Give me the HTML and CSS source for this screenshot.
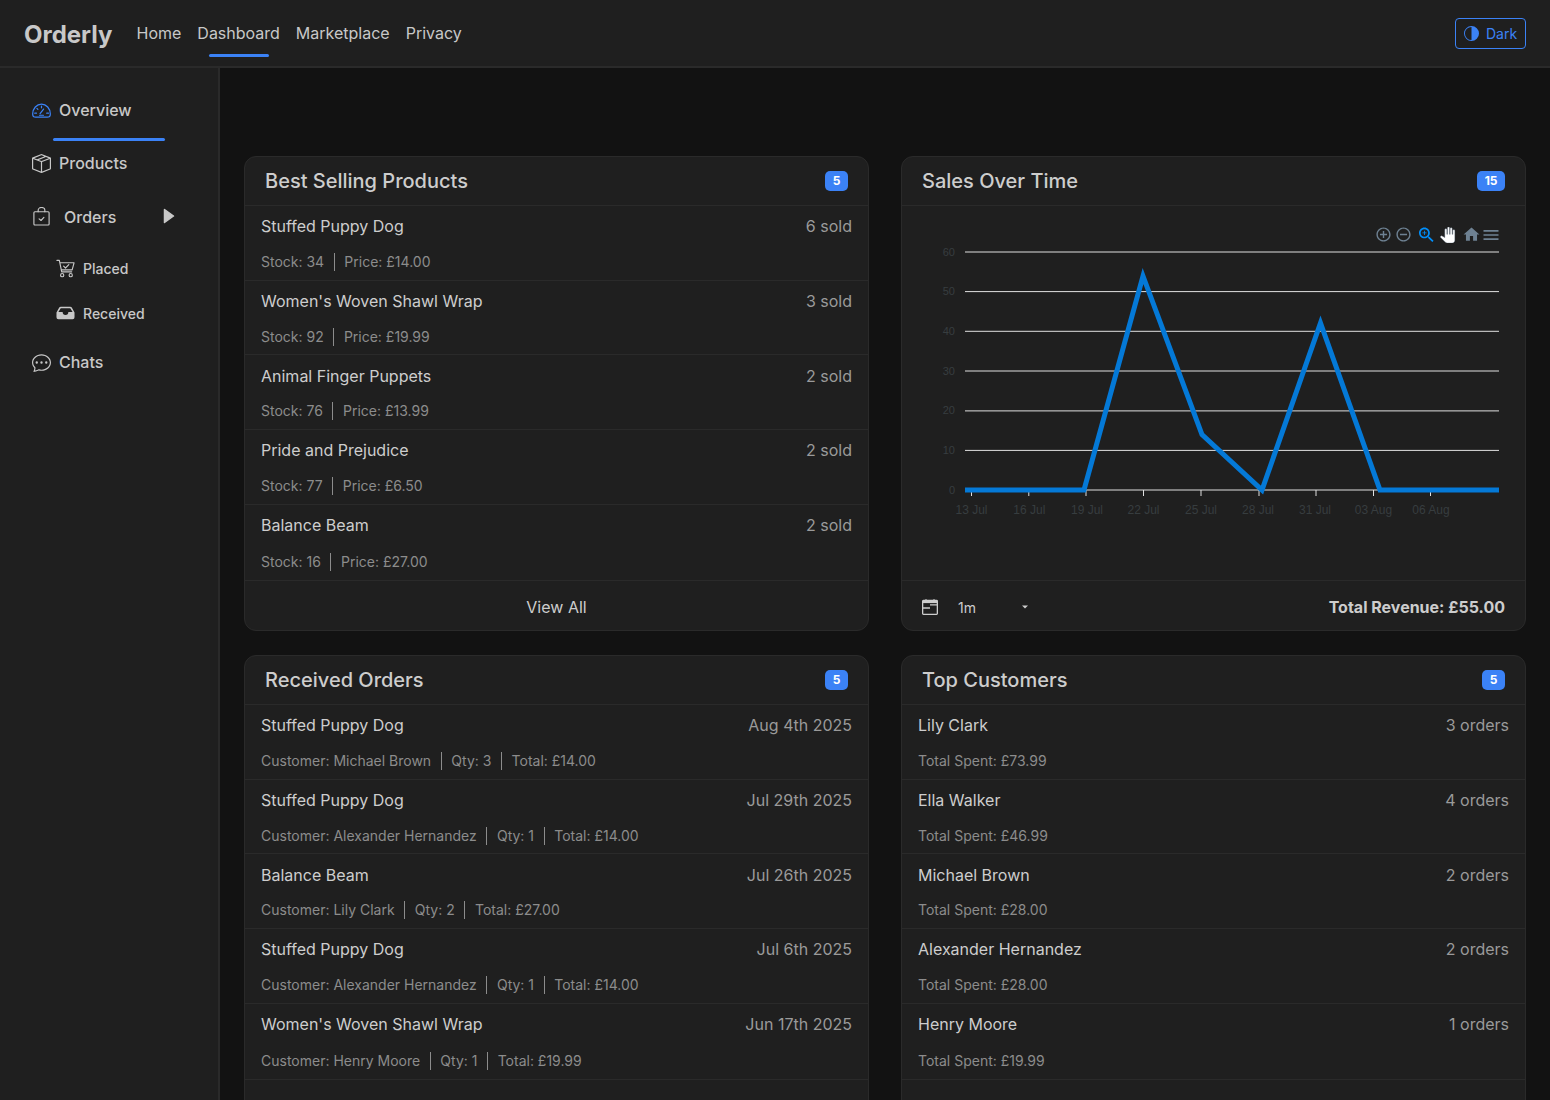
FILE: index.html
```html
<!DOCTYPE html>
<html lang="en">
<head>
<meta charset="utf-8">
<title>Orderly</title>
<link rel="stylesheet" href="styles.css">
</head>
<body>
<header class="topbar">
  <div class="brand">Orderly</div>
  <nav class="topnav">
    <a class="topnav-link">Home</a>
    <a class="topnav-link is-active">Dashboard</a>
    <a class="topnav-link">Marketplace</a>
    <a class="topnav-link">Privacy</a>
  </nav>
  <button class="theme-btn">
    <svg class="theme-icon" viewBox="0 0 16 16"><path fill="currentColor" d="M8 1a7 7 0 0 0 0 14V1zm0-1a8 8 0 1 1 0 16A8 8 0 0 1 8 0z"/></svg>
    <span>Dark</span>
  </button>
</header>
<div class="shell">
  <aside class="sidebar">
    <a class="side-item side-overview is-active">
      <svg class="side-icon gauge" viewBox="0 0 20 20" fill="none" stroke="currentColor" stroke-width="1.3" stroke-linecap="round" stroke-linejoin="round"><path d="M4 17h12c2 0 3.3-1.4 3.3-3.4C19.300 8 15 3.200 10 3.200S.7 8 .7 13.600C.7 15.600 2 17 4 17z"/><path d="M10 5.500v1.700M5.200 7.800l1 1M2.900 12.800h1.800M15.500 12.800h1.800M8.500 13.300l3.700-4.800M8 15h4"/></svg>
      <span>Overview</span>
    </a>
    <a class="side-item side-products">
      <svg class="side-icon" viewBox="0 0 16 16"><path fill="currentColor" d="M8.186 1.113a.5.5 0 0 0-.372 0L1.846 3.5l2.404.961L10.404 2l-2.218-.887zm3.564 1.426L5.596 5 8 5.961 14.154 3.500l-2.404-.961zm3.250 1.700-6.500 2.600v7.922l6.500-2.600V4.240zM7.500 14.762V6.838L1 4.239v7.925l6.500 2.600zM7.443.184a1.500 1.500 0 0 1 1.114 0l7.129 2.852A.5.500 0 0 1 16 3.500v8.662a1 1 0 0 1-.629.928l-7.185 2.874a.5.500 0 0 1-.372 0L.63 13.090a1 1 0 0 1-.63-.928V3.500a.5.500 0 0 1 .314-.464L7.443.184z"/></svg>
      <span>Products</span>
    </a>
    <a class="side-item side-orders">
      <svg class="side-icon bag" viewBox="0 0 20 20" fill="none" stroke="currentColor" stroke-width="1.200" stroke-linecap="round" stroke-linejoin="round"><rect x="2" y="5" width="16" height="14" rx="1"/><path d="M6.500 5V3.500a3.500 3 0 0 1 7 0V5M7.500 12.500l2 1.700 3-3.200"/></svg>
      <span>Orders</span>
      <svg class="side-caret" viewBox="0 0 12 16"><path fill="currentColor" stroke="currentColor" stroke-width="1.500" stroke-linejoin="round" d="M1.500 1.500l9 6.500-9 6.500z"/></svg>
    </a>
    <div class="side-sub">
      <a class="side-subitem">
        <svg class="sub-icon" viewBox="0 0 20 20" fill="none" stroke="currentColor" stroke-width="1.200" stroke-linecap="round" stroke-linejoin="round"><path d="M1 1.500h2.500L6 13.500h10.500M4 4h15l-2 7.500H5.500"/><circle cx="6.500" cy="17" r="1.700"/><circle cx="15.500" cy="17" r="1.700"/><path d="M8 7.500l2 2 3.500-3.500"/></svg>
        <span>Placed</span>
      </a>
      <a class="side-subitem">
        <svg class="sub-icon inbox" viewBox="0 0 20 20"><path fill="currentColor" fill-rule="evenodd" d="M5 3h10a2 2 0 0 1 1.600.8L19.500 9v5a2 2 0 0 1-2 2h-15a2 2 0 0 1-2-2V9l2.900-5.200A2 2 0 0 1 5 3zM5 4.500L2.500 8.500H7a3 3 0 0 0 6 0h4.500L15 4.500z"/></svg>
        <span>Received</span>
      </a>
    </div>
    <a class="side-item side-chats">
      <svg class="side-icon" viewBox="0 0 16 16"><path fill="currentColor" d="M5 8a1 1 0 1 1-2 0 1 1 0 0 1 2 0zm4 0a1 1 0 1 1-2 0 1 1 0 0 1 2 0zm3 1a1 1 0 1 0 0-2 1 1 0 0 0 0 2z"/><path fill="currentColor" d="m2.165 15.803.02-.004c1.830-.363 2.948-.842 3.468-1.105A9.060 9.060 0 0 0 8 15c4.418 0 8-3.134 8-7s-3.582-7-8-7-8 3.134-8 7c0 1.760.743 3.370 1.970 4.600a10.437 10.437 0 0 1-.524 2.318l-.003.011a10.722 10.722 0 0 1-.244.637c-.079.186.074.394.273.362a21.673 21.673 0 0 0 .693-.125zm.8-3.108a1 1 0 0 0-.287-.801C1.618 10.830 1 9.468 1 8c0-3.192 3.004-6 7-6s7 2.808 7 6c0 3.193-3.004 6-7 6a8.060 8.060 0 0 1-2.088-.272 1 1 0 0 0-.711.074c-.387.196-1.240.570-2.634.893a10.970 10.970 0 0 0 .398-2z"/></svg>
      <span>Chats</span>
    </a>
  </aside>
  <main class="content">
    <section class="card">
      <div class="card-head"><h2 class="card-title">Best Selling Products</h2><span class="badge">5</span></div>
      <ul class="rows">
        <li class="row"><div class="row-top"><span class="row-name">Stuffed Puppy Dog</span><span class="row-meta">6 sold</span></div><div class="row-sub"><span>Stock: 34</span><i class="sep"></i><span>Price: £14.00</span></div></li>
        <li class="row"><div class="row-top"><span class="row-name">Women's Woven Shawl Wrap</span><span class="row-meta">3 sold</span></div><div class="row-sub"><span>Stock: 92</span><i class="sep"></i><span>Price: £19.99</span></div></li>
        <li class="row"><div class="row-top"><span class="row-name">Animal Finger Puppets</span><span class="row-meta">2 sold</span></div><div class="row-sub"><span>Stock: 76</span><i class="sep"></i><span>Price: £13.99</span></div></li>
        <li class="row"><div class="row-top"><span class="row-name">Pride and Prejudice</span><span class="row-meta">2 sold</span></div><div class="row-sub"><span>Stock: 77</span><i class="sep"></i><span>Price: £6.50</span></div></li>
        <li class="row"><div class="row-top"><span class="row-name">Balance Beam</span><span class="row-meta">2 sold</span></div><div class="row-sub"><span>Stock: 16</span><i class="sep"></i><span>Price: £27.00</span></div></li>
      </ul>
      <div class="card-foot center">View All</div>
    </section>

    <section class="card">
      <div class="card-head"><h2 class="card-title">Sales Over Time</h2><span class="badge">15</span></div>
      <div class="chart-wrap">
        <svg class="chart" viewBox="1 0 623 374">
          <g class="grid">
            <line x1="64" x2="598" y1="46" y2="46"/><line x1="64" x2="598" y1="85.600" y2="85.600"/><line x1="64" x2="598" y1="125.300" y2="125.300"/><line x1="64" x2="598" y1="165" y2="165"/><line x1="64" x2="598" y1="204.900" y2="204.900"/><line x1="64" x2="598" y1="244.400" y2="244.400"/><line x1="64" x2="598" y1="284" y2="284"/>
            <line x1="70.500" x2="70.500" y1="284" y2="290"/><line x1="127.800" x2="127.800" y1="284" y2="290"/><line x1="185" x2="185" y1="284" y2="290"/><line x1="242.500" x2="242.500" y1="284" y2="290"/><line x1="300" x2="300" y1="284" y2="290"/><line x1="358" x2="358" y1="284" y2="290"/><line x1="415" x2="415" y1="284" y2="290"/><line x1="472.500" x2="472.500" y1="284" y2="290"/><line x1="529.500" x2="529.500" y1="284" y2="290"/>
          </g>
          <g class="y-labels">
            <text x="48" y="50">60</text><text x="48" y="89">50</text><text x="48" y="129">40</text><text x="48" y="169">30</text><text x="48" y="208">20</text><text x="48" y="248">10</text><text x="48" y="288">0</text>
          </g>
          <g class="x-labels">
            <text x="70.500" y="308">13 Jul</text><text x="128.300" y="308">16 Jul</text><text x="186" y="308">19 Jul</text><text x="242.500" y="308">22 Jul</text><text x="300" y="308">25 Jul</text><text x="357" y="308">28 Jul</text><text x="414" y="308">31 Jul</text><text x="472.500" y="308">03 Aug</text><text x="530" y="308">06 Aug</text>
          </g>
          <polyline class="series" points="64,284 183,284 242,70 301,228.500 361,284 419.500,117 479,284 598,284"/>
          <g class="tools">
            <svg x="474" y="20" width="17" height="17" viewBox="0 0 24 24"><path d="M13 7h-2v4H7v2h4v4h2v-4h4v-2h-4V7zm-1-5C6.480 2 2 6.480 2 12s4.480 10 10 10 10-4.480 10-10S17.520 2 12 2zm0 18c-4.410 0-8-3.590-8-8s3.590-8 8-8 8 3.590 8 8-3.590 8-8 8z"/></svg>
            <svg x="494" y="20" width="17" height="17" viewBox="0 0 24 24"><path d="M7 11v2h10v-2H7zm5-9C6.480 2 2 6.480 2 12s4.480 10 10 10 10-4.480 10-10S17.520 2 12 2zm0 18c-4.410 0-8-3.590-8-8s3.590-8 8-8 8 3.590 8 8-3.590 8-8 8z"/></svg>
            <svg class="tool-on" x="515.500" y="19" width="20" height="20" viewBox="0 0 24 24"><path d="M15.500 14h-.79l-.28-.27C15.410 12.590 16 11.110 16 9.500 16 5.910 13.090 3 9.500 3S3 5.910 3 9.500 5.910 16 9.500 16c1.610 0 3.090-.59 4.230-1.570l.27.28v.79l5 4.990L20.490 19l-4.990-5zm-6 0C7.010 14 5 11.990 5 9.500S7.010 5 9.500 5 14 7.010 14 9.500 11.990 14 9.500 14z"/><path d="M12 10h-2v2H9v-2H7V9h2V7h1v2h2v1z"/></svg>
            <svg class="tool-hand" x="538.500" y="21" width="16" height="16" viewBox="0 0 24 24"><path d="M23 5.500V20c0 2.200-1.800 4-4 4h-7.300c-1.080 0-2.100-.43-2.850-1.190L1 14.830s1.260-1.230 1.300-1.250c.22-.19.49-.29.79-.29.22 0 .42.060.6.160.04.010 4.310 2.460 4.310 2.460V4c0-.83.67-1.500 1.500-1.500S11 3.170 11 4v7h1V1.500c0-.83.67-1.500 1.500-1.500S15 .67 15 1.500V11h1V2.500c0-.83.67-1.500 1.500-1.500s1.500.67 1.500 1.500V11h1V5.500c0-.83.67-1.500 1.500-1.500s1.500.67 1.500 1.500z"/></svg>
            <svg x="561" y="19" width="19" height="19" viewBox="0 0 24 24"><path d="M10 20v-6h4v6h5v-8h3L12 3 2 12h3v8z"/></svg>
            <svg x="580" y="19" width="20" height="20" viewBox="0 0 24 24"><path d="M3 18h18v-2H3v2zm0-5h18v-2H3v2zm0-7v2h18V6H3z"/></svg>
          </g>
        </svg>
      </div>
      <div class="card-foot spread">
        <div class="range">
          <svg class="cal-icon" viewBox="0 0 16 16" fill="none" stroke="currentColor" stroke-width="1.300"><rect x=".65" y="1.500" width="14.700" height="13.800" rx=".8"/><path d="M.65 2.800h14.700" stroke-width="2.600"/><path d="M4 .2v1.500M12 .2v1.500M.65 9h7.350M8 5.800h7.350"/></svg>
          <span class="range-value">1m</span>
          <svg class="range-caret" viewBox="0 0 6 4"><path fill="currentColor" d="M0 .5h6L3 3.500z"/></svg>
        </div>
        <strong class="total">Total Revenue: £55.00</strong>
      </div>
    </section>

    <section class="card">
      <div class="card-head"><h2 class="card-title">Received Orders</h2><span class="badge">5</span></div>
      <ul class="rows">
        <li class="row"><div class="row-top"><span class="row-name">Stuffed Puppy Dog</span><span class="row-meta">Aug 4th 2025</span></div><div class="row-sub"><span>Customer: Michael Brown</span><i class="sep"></i><span>Qty: 3</span><i class="sep"></i><span>Total: £14.00</span></div></li>
        <li class="row"><div class="row-top"><span class="row-name">Stuffed Puppy Dog</span><span class="row-meta">Jul 29th 2025</span></div><div class="row-sub"><span>Customer: Alexander Hernandez</span><i class="sep"></i><span>Qty: 1</span><i class="sep"></i><span>Total: £14.00</span></div></li>
        <li class="row"><div class="row-top"><span class="row-name">Balance Beam</span><span class="row-meta">Jul 26th 2025</span></div><div class="row-sub"><span>Customer: Lily Clark</span><i class="sep"></i><span>Qty: 2</span><i class="sep"></i><span>Total: £27.00</span></div></li>
        <li class="row"><div class="row-top"><span class="row-name">Stuffed Puppy Dog</span><span class="row-meta">Jul 6th 2025</span></div><div class="row-sub"><span>Customer: Alexander Hernandez</span><i class="sep"></i><span>Qty: 1</span><i class="sep"></i><span>Total: £14.00</span></div></li>
        <li class="row"><div class="row-top"><span class="row-name">Women's Woven Shawl Wrap</span><span class="row-meta">Jun 17th 2025</span></div><div class="row-sub"><span>Customer: Henry Moore</span><i class="sep"></i><span>Qty: 1</span><i class="sep"></i><span>Total: £19.99</span></div></li>
      </ul>
    </section>

    <section class="card">
      <div class="card-head"><h2 class="card-title">Top Customers</h2><span class="badge">5</span></div>
      <ul class="rows">
        <li class="row"><div class="row-top"><span class="row-name">Lily Clark</span><span class="row-meta">3 orders</span></div><div class="row-sub"><span>Total Spent: £73.99</span></div></li>
        <li class="row"><div class="row-top"><span class="row-name">Ella Walker</span><span class="row-meta">4 orders</span></div><div class="row-sub"><span>Total Spent: £46.99</span></div></li>
        <li class="row"><div class="row-top"><span class="row-name">Michael Brown</span><span class="row-meta">2 orders</span></div><div class="row-sub"><span>Total Spent: £28.00</span></div></li>
        <li class="row"><div class="row-top"><span class="row-name">Alexander Hernandez</span><span class="row-meta">2 orders</span></div><div class="row-sub"><span>Total Spent: £28.00</span></div></li>
        <li class="row"><div class="row-top"><span class="row-name">Henry Moore</span><span class="row-meta">1 orders</span></div><div class="row-sub"><span>Total Spent: £19.99</span></div></li>
      </ul>
    </section>
  </main>
</div>
</body>
</html>
```
FILE: styles.css
```css
* { box-sizing: border-box; }
html, body { height: 100%; }
body {
  margin: 0;
  height: 1100px;
  overflow: hidden;
  display: flex;
  flex-direction: column;
  background: #121212;
  color: #cdcdcd;
  font-family: Inter, "Liberation Sans", sans-serif;
  font-size: 16px;
}
a { color: inherit; text-decoration: none; }
ul { list-style: none; margin: 0; padding: 0; }

.topbar {
  flex: none;
  height: 68px;
  display: flex;
  align-items: center;
  padding: 0 24px;
  background: #1f1f1f;
  border-bottom: 2px solid #2a2a2a;
}
.brand { font-size: 24px; font-weight: 700; color: #c8c8c8; width: 104.5px; padding-top: 2px; }
.topnav { display: flex; flex: 1; }
.topnav-link { position: relative; padding: 0 8px; line-height: 24px; color: #c8c8c8; }
.topnav-link.is-active::after {
  content: "";
  position: absolute;
  left: 20%;
  width: 60px;
  top: 33px;
  height: 3px;
  border-radius: 2px;
  background: #3b82f6;
}
.theme-btn {
  width: 71px;
  height: 31px;
  padding: 0 0 0 8px;
  display: flex;
  align-items: center;
  gap: 7px;
  background: transparent;
  border: 1px solid #3b82f6;
  border-radius: 4px;
  color: #3b82f6;
  font: 400 14px Inter, "Liberation Sans", sans-serif;
}
.theme-icon { width: 15px; height: 15px; }

.shell { flex: 1; display: flex; min-height: 0; }
.sidebar {
  flex: none;
  width: 220px;
  padding: 15px 0 0 32px;
  background: #1f1f1f;
  border-right: 2px solid #2a2a2a;
  color: #c8c8c8;
  font-weight: 500;
}
.side-item { position: relative; display: flex; align-items: center; gap: 8px; }
.side-overview { height: 53px; }
.side-overview span { margin-top: 1px; }
.side-overview.is-active::after {
  content: "";
  position: absolute;
  left: 21px;
  width: 112px;
  bottom: -5px;
  height: 3px;
  border-radius: 2px;
  background: #3b82f6;
}
.side-products { height: 54px; }
.side-orders { height: 54px; gap: 13px; }
.side-chats { height: 52px; }
.side-icon { width: 19px; height: 19px; flex: none; }
.gauge { color: #3b82f6; margin-top: 1px; }
.bag { margin-top: -2px; }
.side-caret { width: 12px; height: 16px; margin-left: 34px; margin-top: -3px; }
.side-sub { padding: 2px 0 0 24px; }
.side-subitem { display: flex; align-items: center; gap: 8px; height: 45px; font-size: 14px; }
.sub-icon { width: 19px; height: 19px; flex: none; }

.content {
  flex: 1;
  min-width: 0;
  padding: 88px 24px 0;
  display: grid;
  grid-template-columns: 625px 625px;
  grid-auto-rows: 475px;
  column-gap: 32px;
  row-gap: 24px;
}
.card {
  display: flex;
  flex-direction: column;
  background: #1f1f1f;
  border: 1px solid #2a2a2a;
  border-radius: 12px;
  min-height: 0;
}
.card-head {
  flex: none;
  height: 49px;
  padding: 0 20px;
  display: flex;
  align-items: center;
  justify-content: space-between;
  border-bottom: 1px solid #2a2a2a;
}
.card-title { margin: 0; font-size: 20px; font-weight: 500; color: #cdcdcd; }
.badge {
  height: 20px;
  padding: 0 7.5px;
  border-radius: 5px;
  background: #3b82f6;
  color: #fff;
  font-size: 12px;
  font-weight: 700;
  line-height: 20px;
}
.rows { flex: 1; }
.row {
  padding: 8.4px 16px 7.67px;
  border-bottom: 1px solid #2a2a2a;
}
.row:last-child { padding-bottom: 8.67px; }
.row-top { display: flex; justify-content: space-between; line-height: 24px; }
.row-name { color: #cdcdcd; }
.row-meta { color: #9a9a9a; }
.row-sub {
  margin-top: 13.6px;
  display: flex;
  align-items: center;
  gap: 9.6px;
  font-size: 14px;
  line-height: 20px;
  color: #8c8c8c;
}
.row:last-child .row-sub { margin-top: 14.6px; }
.sep { width: 1px; height: 18px; background: #8c8c8c; }

.card-foot { flex: none; height: 49px; display: flex; align-items: center; }
.card-foot.center { justify-content: center; color: #cdcdcd; padding-top: 2px; }
.card-foot.spread { justify-content: space-between; padding: 3px 20px 0; border-top: 1px solid #2a2a2a; height: 50px; }

.chart-wrap { flex: 1; min-height: 0; }
.chart { display: block; width: 623px; height: 374px; }
.grid line { stroke: #e0e0e0; stroke-width: 1; }
.y-labels text { font: 11px "Liberation Sans", sans-serif; fill: #373d3f; text-anchor: end; transform: translateX(6px); }
.x-labels text { font: 12px "Liberation Sans", sans-serif; fill: #373d3f; text-anchor: middle; }
.series { fill: none; stroke: #0479d7; stroke-width: 5; stroke-linejoin: miter; }
.tools path { fill: #6e8192; }
.tools .tool-on path { fill: #008ffb; }
.tools .tool-hand path { fill: #fff; stroke: #6e8192; stroke-width: .6; }

.range { display: flex; align-items: center; color: #cdcdcd; }
.cal-icon { width: 16px; height: 16px; }
.range-value { font-size: 14px; margin-left: 20px; width: 64px; }
.range-caret { width: 6px; height: 4px; }
.total { font-weight: 700; color: #cdcdcd; }
```
